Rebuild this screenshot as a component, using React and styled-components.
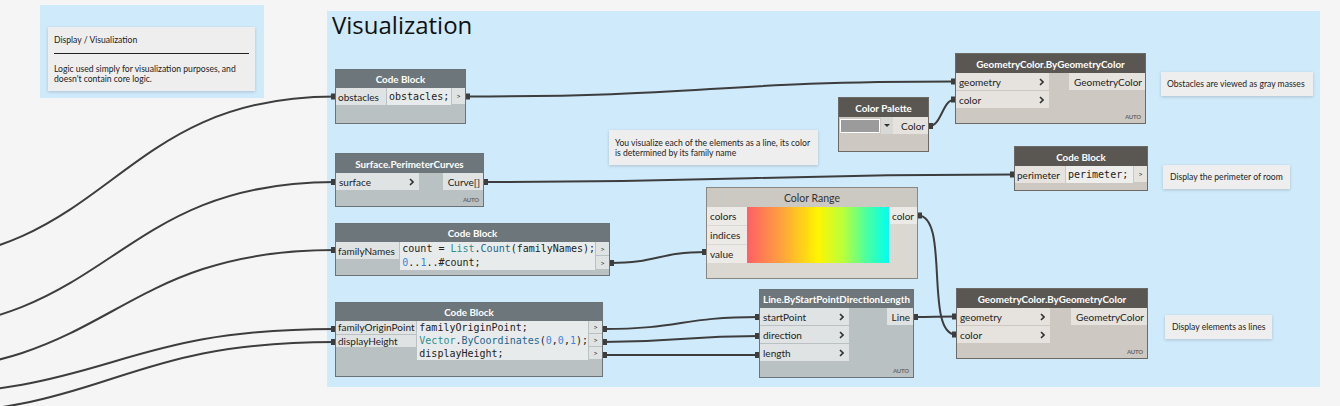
import React from "react";
import styled, { createGlobalStyle } from "styled-components";

const Global = createGlobalStyle`
  html, body { margin: 0; padding: 0; background: #f5f5f5; }
  body { font-family: Lato, "Open Sans", sans-serif; }
`;

const tones = {
  blue: { head: "#6d767a", headText: "#fff", body: "#b9c1c3", row: "#dfe3e3", code: "#e8ebeb", border: "#6c7377" },
  dark: { head: "#5a5753", headText: "#fff", body: "#cdc9c2", row: "#e6e3de", code: "#eeeeec", border: "#6d6a66" },
  light: { head: "#ccc8c2", headText: "#333", body: "#dbd8d2", row: "#eceae7", code: "#eeeeec", border: "#8a8782" },
};

const Canvas = styled.div`
  position: relative;
  width: 1340px;
  height: 406px;
  overflow: hidden;
  background: #f5f5f5;
`;

const Group = styled.div`
  position: absolute;
  left: ${(p) => p.$x}px;
  top: ${(p) => p.$y}px;
  width: ${(p) => p.$w}px;
  height: ${(p) => p.$h}px;
  background: #cfeafb;
`;

const GroupTitle = styled.div`
  font-family: "Open Sans", Lato, sans-serif;
  font-size: 24px;
  line-height: 1;
  color: #111;
  padding: 2px 0 0 5px;
`;

const Note = styled.div`
  position: absolute;
  left: ${(p) => p.$x}px;
  top: ${(p) => p.$y}px;
  width: ${(p) => p.$w}px;
  min-height: ${(p) => p.$h}px;
  box-sizing: border-box;
  background: #eeeeee;
  box-shadow: 0 1px 3px rgba(0, 0, 0, 0.18);
  font-size: 8.6px;
  line-height: 10px;
  color: #222;
  padding: ${(p) => p.$pad || "7px 6px"};
  white-space: ${(p) => (p.$single ? "nowrap" : "normal")};
  display: flex;
  flex-direction: column;
  justify-content: center;
`;

const NoteRule = styled.div`
  height: 1px;
  background: #222;
  margin: 8px 0 10px;
`;

const Wires = styled.svg`
  position: absolute;
  left: 0;
  top: 0;
  pointer-events: none;
`;

const NodeBox = styled.div`
  position: absolute;
  left: ${(p) => p.$x}px;
  top: ${(p) => p.$y}px;
  width: ${(p) => p.$w}px;
  height: ${(p) => p.$h}px;
  box-sizing: border-box;
  border: 1px solid ${(p) => tones[p.$tone].border};
  background: ${(p) => tones[p.$tone].body};
  display: flex;
  flex-direction: column;
`;

const Header = styled.div`
  flex: none;
  height: ${(p) => p.$h}px;
  background: ${(p) => tones[p.$tone].head};
  color: ${(p) => tones[p.$tone].headText};
  font-weight: ${(p) => (p.$tone === "light" ? 400 : 700)};
  font-size: ${(p) => (p.$tone === "light" ? 10.5 : 9.8)}px;
  display: flex;
  align-items: center;
  justify-content: center;
  white-space: nowrap;
  overflow: hidden;
`;

const Ports = styled.div`
  display: flex;
  justify-content: space-between;
  align-items: flex-start;
`;

const Col = styled.div`
  display: flex;
  flex-direction: column;
  gap: 1px;
  width: ${(p) => (p.$w ? `${p.$w}px` : "auto")};
`;

const InRow = styled.div`
  height: ${(p) => p.$h || 17}px;
  background: ${(p) => tones[p.$tone].row};
  display: flex;
  align-items: center;
  justify-content: space-between;
  padding: 0 5px 0 3px;
  font-size: 10px;
  color: #222;
`;

const OutRow = styled.div`
  height: 17px;
  background: ${(p) => tones[p.$tone].row};
  display: flex;
  align-items: center;
  justify-content: flex-end;
  padding: 0 3px 0 5px;
  font-size: 10px;
  color: #222;
`;

const Auto = styled.div`
  margin-top: auto;
  align-self: flex-end;
  font-size: 6px;
  font-weight: 700;
  color: #6a6a6a;
  padding: 0 4px 3px 0;
  letter-spacing: -0.2px;
`;

const CodeRow = styled.div`
  display: flex;
  gap: 1px;
  align-items: flex-start;
`;

const CodeIn = styled.div`
  height: ${(p) => p.$h}px;
  background: ${(p) => tones[p.$tone].row};
  display: flex;
  align-items: center;
  padding-left: 2px;
  font-size: 10px;
  color: #222;
  white-space: nowrap;
`;

const CodeArea = styled.div`
  flex: 1;
  background: ${(p) => tones[p.$tone].code};
  font-family: "DejaVu Sans Mono", "Liberation Mono", monospace;
  font-size: 10px;
  color: #222;
  padding-left: 2px;
`;

const CodeLine = styled.div`
  height: ${(p) => p.$h}px;
  line-height: ${(p) => p.$h}px;
  white-space: pre;
`;

const Cls = styled.span`color: #2f8f94;`;
const Fn = styled.span`color: #23668f;`;
const Num = styled.span`color: #3a86e0;`;

const CodeOut = styled.div`
  width: 13px;
  height: ${(p) => p.$h - 1}px;
  margin-bottom: 1px;
  background: ${(p) => tones[p.$tone].row};
  display: flex;
  align-items: center;
  justify-content: center;
  font-size: 8px;
  color: #333;
`;

const Swatch = styled.div`
  width: 38px;
  height: 12px;
  background: #9b9b9b;
  border: 1px solid #fff;
  margin: 2px 1px 0 1px;
`;

const Drop = styled.div`
  width: 12px;
  height: 17px;
  background: #d8d8d6;
  display: flex;
  align-items: center;
  justify-content: center;
  &::after {
    content: "";
    border-left: 3px solid transparent;
    border-right: 3px solid transparent;
    border-top: 3px solid #333;
  }
`;

const PaletteRow = styled.div`
  display: flex;
  align-items: flex-start;
`;

const PaletteOut = styled(OutRow)`
  flex: 1;
`;

const Gradient = styled.div`
  width: 142px;
  height: 56px;
  background: linear-gradient(90deg, #ff5f66 0%, #ffa43c 25%, #fff500 50%, #b8ff3c 68%, #4dffa0 84%, #00fff0 100%);
`;

function Chevron() {
  return (
    <svg width="5" height="8" viewBox="0 0 5 8">
      <path d="M1 1 L4 4 L1 7" fill="none" stroke="#333" strokeWidth="1.6" />
    </svg>
  );
}

function Node({ x, y, w, h, title, tone = "dark", headH = 19, inputs = [], inW, outputs = [], auto, children }) {
  return (
    <NodeBox $x={x} $y={y} $w={w} $h={h} $tone={tone}>
      <Header $h={headH} $tone={tone}>{title}</Header>
      {children || (
        <Ports>
          <Col $w={inW}>
            {inputs.map((l) => (
              <InRow key={l} $tone={tone}>
                {l}
                <Chevron />
              </InRow>
            ))}
          </Col>
          <Col>
            {outputs.map((l) => (
              <OutRow key={l} $tone={tone}>{l}</OutRow>
            ))}
          </Col>
        </Ports>
      )}
      {auto && <Auto>AUTO</Auto>}
    </NodeBox>
  );
}

function CodeBlock({ x, y, w, h, tone = "blue", headH = 18, inputs, inW, inH, lineH, lines, outs }) {
  return (
    <NodeBox $x={x} $y={y} $w={w} $h={h} $tone={tone}>
      <Header $h={headH} $tone={tone}>Code Block</Header>
      <CodeRow>
        <Col $w={inW}>
          {inputs.map((l) => (
            <CodeIn key={l} $h={inH} $tone={tone}>{l}</CodeIn>
          ))}
        </Col>
        <CodeArea $tone={tone}>
          {lines.map((l, i) => (
            <CodeLine key={i} $h={lineH}>{l}</CodeLine>
          ))}
        </CodeArea>
        <div>
          {Array.from({ length: outs }).map((_, i) => (
            <CodeOut key={i} $h={lineH} $tone={tone}>&gt;</CodeOut>
          ))}
        </div>
      </CodeRow>
    </NodeBox>
  );
}

const wire = (x1, y1, x2, y2) => {
  const d = Math.abs(x2 - x1) * 0.5;
  return `M${x1} ${y1} C${x1 + d} ${y1} ${x2 - d} ${y2} ${x2} ${y2}`;
};

const links = [
  [-110, 262, 335, 96.5],
  [-110, 330, 335, 182],
  [-110, 372, 335, 250],
  [-110, 395, 335, 329],
  [-110, 415, 335, 342],
  [466, 96.5, 955, 81.5],
  [929, 126, 955, 99.5],
  [484, 182, 1014, 174.5],
  [610, 263, 706, 252],
  [603, 329, 759, 317],
  [603, 342, 759, 336],
  [603, 355, 759, 355],
  [914, 317, 956, 316.5],
];

export default function App() {
  return (
    <Canvas>
      <Global />
      <Group $x={40} $y={5} $w={224} $h={93} />
      <Group $x={327} $y={11} $w={993} $h={376}>
        <GroupTitle>Visualization</GroupTitle>
      </Group>

      <Note $x={48} $y={27} $w={207} $h={64} $pad="7px 6px">
        <div>Display / Visualization</div>
        <NoteRule />
        <div>Logic used simply for visualization purposes, and doesn't contain core logic.</div>
      </Note>
      <Note $x={609} $y={130} $w={209} $h={35}>
        You visualize each of the elements as a line, its color is determined by its family name
      </Note>
      <Note $x={1161} $y={72} $w={152} $h={24} $pad="0 6px" $single>Obstacles are viewed as gray masses</Note>
      <Note $x={1163} $y={165} $w={127} $h={24} $pad="0 7px" $single>Display the perimeter of room</Note>
      <Note $x={1165} $y={315} $w={107} $h={24} $pad="0 7px" $single>Display elements as lines</Note>

      <Wires width="1340" height="406">
        {links.map(([a, b, c, d], i) => (
          <path key={i} d={wire(a, b, c, d)} fill="none" stroke="#3d3d3d" strokeWidth="2" />
        ))}
        <path d="M918 215.5 C950 215.5 924 334.5 956 334.5" fill="none" stroke="#3d3d3d" strokeWidth="2" />
        {links.map(([a, b, c, d], i) => (
          <g key={`t${i}`} fill="#3d3d3d">
            {a > 0 && <rect x={a} y={b - 3} width="4" height="6" />}
            <rect x={c - 4} y={d - 3} width="4" height="6" />
          </g>
        ))}
        <rect x="918" y="212.5" width="4" height="6" fill="#3d3d3d" />
        <rect x="952" y="331.5" width="4" height="6" fill="#3d3d3d" />
      </Wires>

      <CodeBlock x={335} y={69} w={131} h={55} inputs={["obstacles"]} inW={50} inH={17} lineH={17}
        lines={["obstacles;"]} outs={1} />
      <CodeBlock x={335} y={223} w={275} h={53} inputs={["familyNames"]} inW={64} inH={17} lineH={14}
        lines={[
          <>count = <Cls>List</Cls>.<Fn>Count</Fn>(familyNames);</>,
          <><Num>0</Num>..<Num>1</Num>..#count;</>,
        ]} outs={2} />
      <CodeBlock x={335} y={302} w={268} h={75} inputs={["familyOriginPoint", "displayHeight"]} inW={83} inH={12.5} lineH={13}
        lines={[
          "familyOriginPoint;",
          <><Cls>Vector</Cls>.<Fn>ByCoordinates</Fn>(<Num>0</Num>,<Num>0</Num>,<Num>1</Num>);</>,
          "displayHeight;",
        ]} outs={3} />
      <CodeBlock x={1014} y={146} w={134} h={45} tone="dark" headH={19} inputs={["perimeter"]} inW={50} inH={17} lineH={17}
        lines={["perimeter;"]} outs={1} />

      <Node x={955} y={53} w={191} h={71} title="GeometryColor.ByGeometryColor" inputs={["geometry", "color"]} inW={93}
        outputs={["GeometryColor"]} auto />
      <Node x={956} y={288} w={192} h={71} title="GeometryColor.ByGeometryColor" inputs={["geometry", "color"]} inW={93}
        outputs={["GeometryColor"]} auto />
      <Node x={335} y={153} w={149} h={54} tone="blue" title="Surface.PerimeterCurves" inputs={["surface"]} inW={83}
        outputs={["Curve[]"]} auto />
      <Node x={759} y={289} w={155} h={89} tone="blue" headH={18} title="Line.ByStartPointDirectionLength"
        inputs={["startPoint", "direction", "length"]} inW={89} outputs={["Line"]} auto />

      <Node x={838} y={97} w={91} h={55} title="Color Palette">
        <PaletteRow>
          <Swatch />
          <Drop />
          <PaletteOut $tone="dark">Color</PaletteOut>
        </PaletteRow>
      </Node>

      <Node x={706} y={187} w={212} h={92} tone="light" title="Color Range">
        <Ports>
          <Col $w={40}>
            {["colors", "indices", "value"].map((l) => (
              <InRow key={l} $tone="light" $h={18}>{l}</InRow>
            ))}
          </Col>
          <Gradient />
          <Col $w={28}>
            <OutRow $tone="light">color</OutRow>
          </Col>
        </Ports>
      </Node>
    </Canvas>
  );
}
